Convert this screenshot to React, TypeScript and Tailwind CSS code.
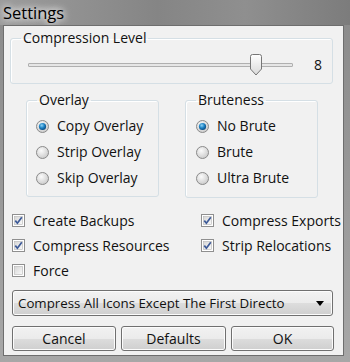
import React from "react";

function Radio({ checked }: { checked?: boolean }) {
  return (
    <svg width="13" height="13" viewBox="0 0 13 13" className="shrink-0">
      <defs>
        <radialGradient id="rb" cx="40%" cy="35%" r="70%">
          <stop offset="0%" stopColor="#fbfbfb" />
          <stop offset="100%" stopColor="#c9c9c9" />
        </radialGradient>
        <radialGradient id="rd" cx="40%" cy="35%" r="65%">
          <stop offset="0%" stopColor="#8fd3f5" />
          <stop offset="55%" stopColor="#1c82c4" />
          <stop offset="100%" stopColor="#0a4a80" />
        </radialGradient>
      </defs>
      <circle cx="6.5" cy="6.5" r="6" fill="url(#rb)" stroke="#8a8a8a" />
      {checked && <circle cx="6.5" cy="6.5" r="3.6" fill="url(#rd)" />}
    </svg>
  );
}

function Check({ checked }: { checked?: boolean }) {
  return (
    <svg width="13" height="13" viewBox="0 0 13 13" className="shrink-0">
      <defs>
        <linearGradient id="cb" x1="0" y1="0" x2="1" y2="1">
          <stop offset="0%" stopColor="#d6d6d6" />
          <stop offset="100%" stopColor="#fafafa" />
        </linearGradient>
      </defs>
      <rect x="0.5" y="0.5" width="12" height="12" fill="#fff" stroke="#8f8f8f" />
      <rect x="2.5" y="2.5" width="8" height="8" fill="url(#cb)" stroke="#b4b4b4" strokeWidth="0.6" />
      {checked && (
        <path d="M3.3 6.6 L5.4 9.2 L9.8 3.2" fill="none" stroke="#3d5a98" strokeWidth="1.7" />
      )}
    </svg>
  );
}

function RadioRow({ label, checked }: { label: string; checked?: boolean }) {
  return (
    <div className="h-[26px] flex items-center gap-[8px]">
      <Radio checked={checked} />
      <span>{label}</span>
    </div>
  );
}

function CheckRow({ label, checked }: { label: string; checked?: boolean }) {
  return (
    <div className="h-[25px] flex items-center gap-[8px] whitespace-nowrap">
      <Check checked={checked} />
      <span>{label}</span>
    </div>
  );
}

const btn =
  "h-[25px] flex items-center justify-center rounded-[3px] border border-[#707070] shadow-[inset_0_0_0_1px_#fcfcfc] bg-[linear-gradient(to_bottom,#f2f2f2_0%,#ebebeb_50%,#dddddd_50%,#cfcfcf_100%)]";

export default function App() {
  return (
    <div className="w-[350px] h-[362px] flex flex-col bg-[linear-gradient(to_bottom,#8a8a8a,#a7a7a7)] font-['Open_Sans',sans-serif] text-[14px] leading-[16px] text-[#111]">
      <div className="h-[25px] pl-[3px] flex items-center bg-[linear-gradient(to_right,#9c9c9c,#858585_45%,#8f8f8f_70%,#7c7c7c)]">
        <span className="text-[16.5px] text-black [text-shadow:0_0_6px_#ffffff,0_0_10px_#ffffff]">Settings</span>
      </div>
      <div className="flex-1 ml-[3px] mr-[6px] mb-[6px] border border-[#6e6e6e] bg-[#f1f1f1] flex flex-col">
        <fieldset className="ml-[6px] mt-[4px] w-[323px] h-[54px] border border-[#d5dfe5] rounded-[3px] shadow-[inset_1px_1px_0_#fff]">
          <legend className="ml-[10px] px-[2px]">Compression Level</legend>
          <div className="flex items-center h-[37px] pl-[17px]">
            <div className="relative w-[265px] h-[4px] border border-[#b0b0b0] bg-[#e6e6e6] rounded-[1px]">
              <svg width="14" height="22" viewBox="0 0 14 22" className="absolute left-[220px] -top-[10px]">
                <defs>
                  <linearGradient id="th" x1="0" y1="0" x2="0" y2="1">
                    <stop offset="0%" stopColor="#ffffff" />
                    <stop offset="100%" stopColor="#d9d9d9" />
                  </linearGradient>
                </defs>
                <path d="M1.5 2.5 Q1.5 0.5 3.5 0.5 H10.5 Q12.5 0.5 12.5 2.5 V15 L7 21 L1.5 15 Z" fill="url(#th)" stroke="#767676" />
              </svg>
            </div>
            <span className="ml-[21px]">8</span>
          </div>
        </fieldset>

        <div className="flex mt-[8px] ml-[22px] gap-[26px]">
          <fieldset className="w-[133px] h-[105px] border border-[#d5dfe5] rounded-[3px] shadow-[inset_1px_1px_0_#fff]">
            <legend className="ml-[10px] px-[2px]">Overlay</legend>
            <div className="pt-[5px] pl-[9px] flex flex-col">
              <RadioRow label="Copy Overlay" checked />
              <RadioRow label="Strip Overlay" />
              <RadioRow label="Skip Overlay" />
            </div>
          </fieldset>
          <fieldset className="w-[133px] h-[106px] border border-[#d5dfe5] rounded-[3px] shadow-[inset_1px_1px_0_#fff]">
            <legend className="ml-[10px] px-[2px]">Bruteness</legend>
            <div className="pt-[5px] pl-[10px] flex flex-col">
              <RadioRow label="No Brute" checked />
              <RadioRow label="Brute" />
              <RadioRow label="Ultra Brute" />
            </div>
          </fieldset>
        </div>

        <div className="flex mt-[10px] ml-[8px]">
          <div className="w-[189px] flex flex-col">
            <CheckRow label="Create Backups" checked />
            <CheckRow label="Compress Resources" checked />
            <CheckRow label="Force" />
          </div>
          <div className="flex flex-col">
            <CheckRow label="Compress Exports" checked />
            <CheckRow label="Strip Relocations" checked />
          </div>
        </div>

        <div className={`${btn} mt-[7px] ml-[8px] w-[321px] h-[26px] !justify-between pl-[5px] pr-[8px]`}>
          <span className="whitespace-nowrap text-[13.3px]">Compress All Icons Except The First Directo</span>
          <svg width="8" height="5" viewBox="0 0 8 5" className="shrink-0 ml-[4px]">
            <path d="M0 0 H8 L4 5 Z" fill="#000" />
          </svg>
        </div>

        <div className="flex mt-[10px] ml-[8px] gap-[5px]">
          <div className={`${btn} w-[104px]`}>Cancel</div>
          <div className={`${btn} w-[105px]`}>Defaults</div>
          <div className={`${btn} w-[103px]`}>OK</div>
        </div>
      </div>
    </div>
  );
}
